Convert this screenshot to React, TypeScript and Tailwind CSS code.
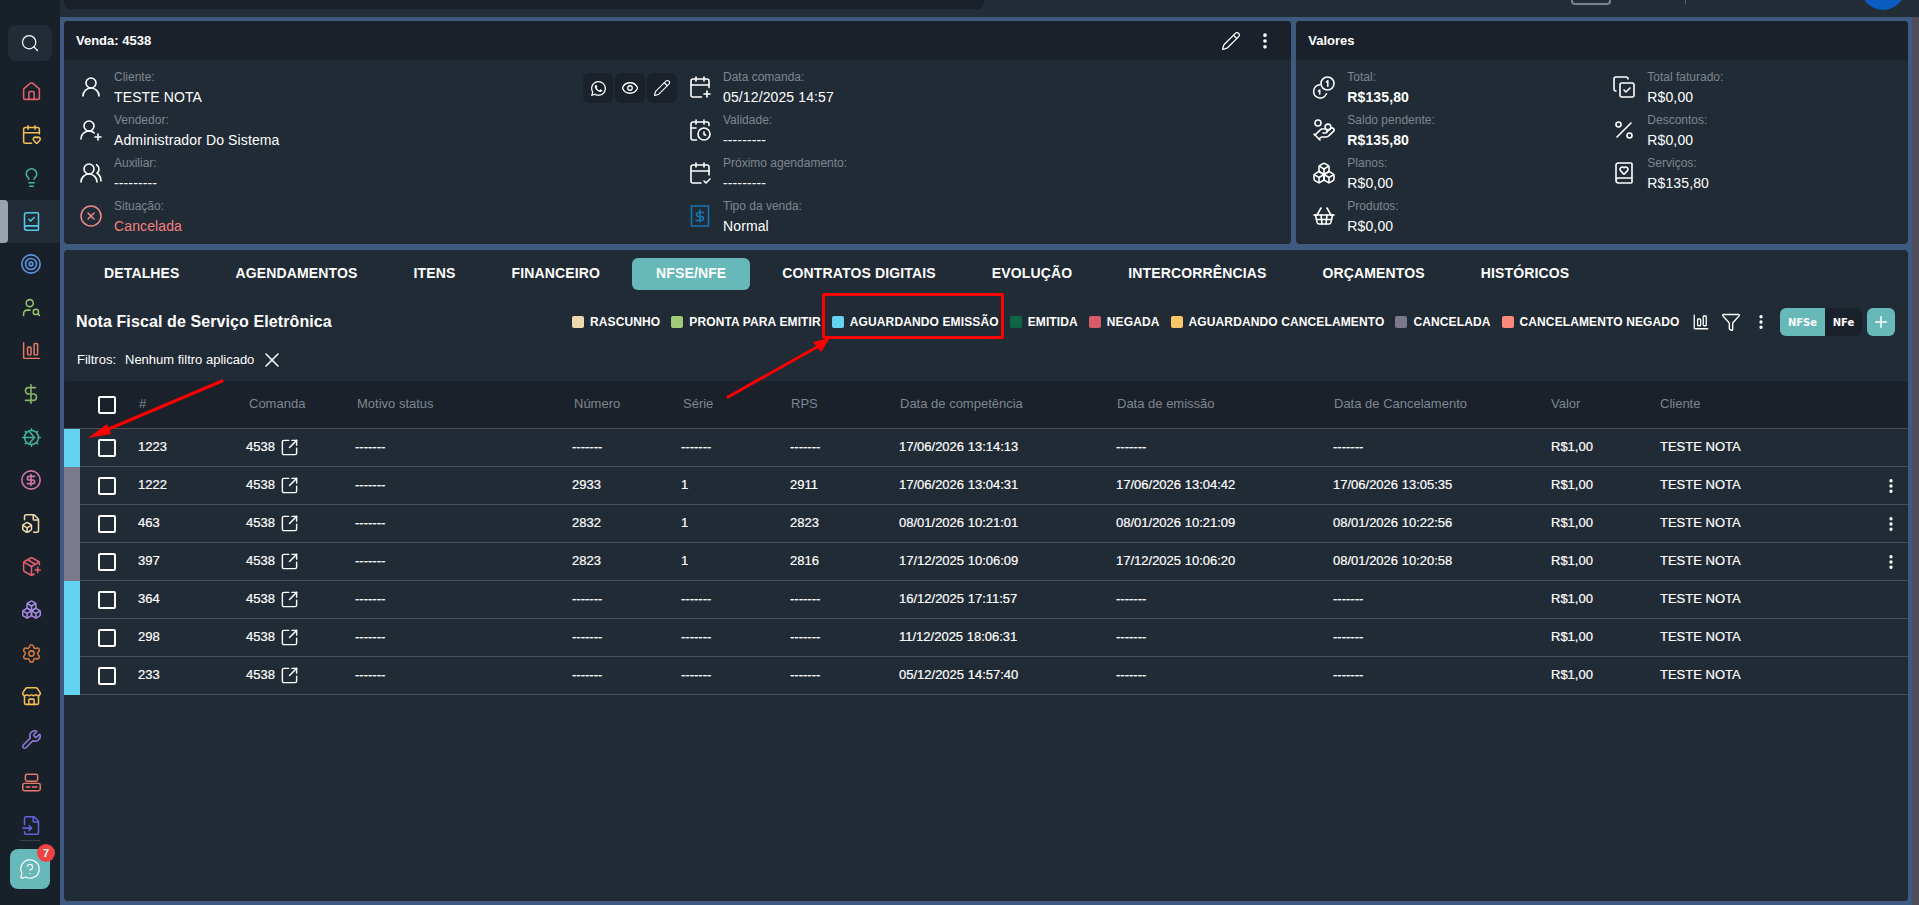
import type { ReactNode } from 'react';
import {
  BookCheck, BookHeart, Boxes, CalendarCheck2, CalendarClock, CalendarHeart, CalendarPlus, CircleDollarSign,
  CircleX, CopyCheck, DollarSign, EllipsisVertical, Eye, FileBox, FileInput, Funnel, HandCoins, House, Lightbulb,
  MessageCircleQuestion, PackagePlus, Pencil, Percent, Plus, Search, Settings, ShoppingBasket, SquareArrowOutUpRight,
  Store, Target, UserRound, UserRoundPlus, UserSearch, UsersRound, Wrench, X,
} from 'lucide-react';
import { BsWhatsapp } from 'react-icons/bs';

function BarsIcon({ className }: { className?: string }) {
  return (
    <svg viewBox="0 0 24 24" fill="none" stroke="currentColor" strokeWidth="1.7" strokeLinecap="round" className={className}>
      <path d="M3 3v17a1 1 0 0 0 1 1h17" />
      <rect x="7.5" y="8" width="4" height="9" rx="1" />
      <rect x="15" y="4" width="4" height="13" rx="1" />
    </svg>
  );
}

function GearPlayIcon({ className }: { className?: string }) {
  return (
    <svg viewBox="0 0 24 24" fill="none" stroke="currentColor" strokeWidth="1.8" strokeLinecap="round" strokeLinejoin="round" className={className}>
      <circle cx="12" cy="12" r="8" />
      <path d="M12 2v2M12 20v2M2 12h2M20 12h2M5 5l1.4 1.4M17.6 17.6 19 19M5 19l1.4-1.4M17.6 6.4 19 5" />
      <path d="M9 4.8 15.5 12 9 19.2M15.5 12H4" />
    </svg>
  );
}

function ServerIcon({ className }: { className?: string }) {
  return (
    <svg viewBox="0 0 24 24" fill="none" stroke="currentColor" strokeWidth="1.7" strokeLinecap="round" className={className}>
      <rect x="5" y="2.5" width="14" height="8" rx="2" />
      <rect x="2" y="13" width="20" height="8.5" rx="2" />
      <path d="M6 17.2h4M13 17.2h5" />
    </svg>
  );
}

function CoinsIcon({ className }: { className?: string }) {
  return (
    <svg viewBox="0 0 24 24" fill="none" stroke="currentColor" strokeWidth="1.6" strokeLinecap="round" strokeLinejoin="round" className={className}>
      <circle cx="15.5" cy="8.5" r="6.5" />
      <path d="M14.5 7l1.3-1.2v5.5" />
      <path d="M8 9.8a6.6 6.6 0 1 0 6.4 9" />
      <path d="M6.5 16l1.2-1v4" />
    </svg>
  );
}

function ReceiptIcon({ className }: { className?: string }) {
  return (
    <svg viewBox="0 0 24 24" fill="none" stroke="currentColor" strokeWidth="1.6" strokeLinecap="round" className={className}>
      <rect x="3.5" y="2" width="17" height="20" strokeDasharray="1.4 0.7" />
      <path d="M12 6v12M15.5 8.5H10.5a2 2 0 0 0 0 4h3a2 2 0 0 1 0 4H8" />
    </svg>
  );
}

const NAV = [
  { icon: <House size={21} strokeWidth={1.75} className="text-[#e0606e]" /> },
  { icon: <CalendarHeart size={21} strokeWidth={1.75} className="text-[#f5bd55]" /> },
  { icon: <Lightbulb size={21} strokeWidth={1.75} className="text-[#45b89a]" /> },
  { icon: <BookCheck size={21} strokeWidth={1.75} className="text-[#55c8ea]" />, active: true },
  { icon: <Target size={22} strokeWidth={1.75} className="text-[#5b93e0]" /> },
  { icon: <UserSearch size={21} strokeWidth={1.75} className="text-[#97c46c]" /> },
  { icon: <BarsIcon className="h-[21px] w-[21px] text-[#e5796c]" /> },
  { icon: <DollarSign size={22} strokeWidth={1.75} className="text-[#85b565]" /> },
  { icon: <GearPlayIcon className="h-[21px] w-[21px] text-[#3fb595]" /> },
  { icon: <CircleDollarSign size={22} strokeWidth={1.75} className="text-[#d276a8]" /> },
  { icon: <FileBox size={21} strokeWidth={1.75} className="text-[#eed9ab]" /> },
  { icon: <PackagePlus size={21} strokeWidth={1.75} className="text-[#e0606e]" /> },
  { icon: <Boxes size={21} strokeWidth={1.75} className="text-[#a58be0]" /> },
  { icon: <Settings size={21} strokeWidth={1.75} className="text-[#d9793f]" /> },
  { icon: <Store size={21} strokeWidth={1.75} className="text-[#f5bd55]" /> },
  { icon: <Wrench size={21} strokeWidth={1.75} className="text-[#8f7bd6]" /> },
  { icon: <ServerIcon className="h-[21px] w-[21px] text-[#e5796c]" /> },
  { icon: <FileInput size={21} strokeWidth={1.75} className="text-[#6163d8]" /> },
];

const LEGEND = [
  { label: 'RASCUNHO', color: 'bg-[#ecd9b0]' },
  { label: 'PRONTA PARA EMITIR', color: 'bg-[#a2cb78]' },
  { label: 'AGUARDANDO EMISSÃO', color: 'bg-[#62d4f2]' },
  { label: 'EMITIDA', color: 'bg-[#0e6645]' },
  { label: 'NEGADA', color: 'bg-[#d95b68]' },
  { label: 'AGUARDANDO CANCELAMENTO', color: 'bg-[#fcc666]' },
  { label: 'CANCELADA', color: 'bg-[#7a7a8c]' },
  { label: 'CANCELAMENTO NEGADO', color: 'bg-[#fb8a7a]' },
];

const TABS = ['DETALHES', 'AGENDAMENTOS', 'ITENS', 'FINANCEIRO', 'NFSE/NFE', 'CONTRATOS DIGITAIS', 'EVOLUÇÃO', 'INTERCORRÊNCIAS', 'ORÇAMENTOS', 'HISTÓRICOS'];

const COLUMNS = 'grid grid-cols-[58px_108px_109px_217px_109px_109px_109px_217px_217px_218px_109px_1fr_35px] items-center [&>div]:pb-[2px]';

const ROWS = [
  { id: '1223', stripe: 'bg-[#62d4f2]', numero: '-------', serie: '-------', rps: '-------', comp: '17/06/2026 13:14:13', emissao: '-------', cancel: '-------' },
  { id: '1222', stripe: 'bg-[#7a7a8c]', numero: '2933', serie: '1', rps: '2911', comp: '17/06/2026 13:04:31', emissao: '17/06/2026 13:04:42', cancel: '17/06/2026 13:05:35', menu: true },
  { id: '463', stripe: 'bg-[#7a7a8c]', numero: '2832', serie: '1', rps: '2823', comp: '08/01/2026 10:21:01', emissao: '08/01/2026 10:21:09', cancel: '08/01/2026 10:22:56', menu: true },
  { id: '397', stripe: 'bg-[#7a7a8c]', numero: '2823', serie: '1', rps: '2816', comp: '17/12/2025 10:06:09', emissao: '17/12/2025 10:06:20', cancel: '08/01/2026 10:20:58', menu: true },
  { id: '364', stripe: 'bg-[#62d4f2]', numero: '-------', serie: '-------', rps: '-------', comp: '16/12/2025 17:11:57', emissao: '-------', cancel: '-------' },
  { id: '298', stripe: 'bg-[#62d4f2]', numero: '-------', serie: '-------', rps: '-------', comp: '11/12/2025 18:06:31', emissao: '-------', cancel: '-------' },
  { id: '233', stripe: 'bg-[#62d4f2]', numero: '-------', serie: '-------', rps: '-------', comp: '05/12/2025 14:57:40', emissao: '-------', cancel: '-------' },
];

function Info({ icon, label, value, valueClass }: { icon: ReactNode; label: string; value: string; valueClass?: string }) {
  return (
    <div className="flex h-[43px] items-center">
      <div className="flex w-[24px] shrink-0 justify-center text-white">{icon}</div>
      <div className="ml-[11px]">
        <div className="text-[12px] leading-5 text-[#7f868e]">{label}</div>
        <div className={`text-[14px] leading-5 tracking-[0.12px] ${valueClass ?? 'text-white'}`}>{value}</div>
      </div>
    </div>
  );
}

function Checkbox() {
  return <span className="block h-[18px] w-[18px] rounded-[2px] border-2 border-white" />;
}

export default function App() {
  return (
    <div className="relative flex h-screen w-full overflow-hidden bg-[#18202a] font-['Liberation_Sans',sans-serif] text-white">
      <aside className="flex w-[60px] shrink-0 flex-col">
        <div className="ml-2 mt-[25px] flex h-[36px] w-[44px] items-center justify-center rounded-lg bg-[#222c37]">
          <Search size={20} strokeWidth={1.5} />
        </div>
        <nav className="mt-[9px] flex flex-col">
          {NAV.map((item, i) => (
            <div key={i} className={`relative flex h-[43.2px] items-center justify-center pl-[2px] ${item.active ? 'bg-[#222c37]' : ''}`}>
              {item.active && <span className="absolute inset-y-0 left-0 w-2 rounded-r bg-[#9ca3af]" />}
              {item.icon}
            </div>
          ))}
        </nav>
        <div className="mx-5 -mt-[7px] border-t border-[#39414b]" />
        <div className="relative ml-[10px] mt-2 flex h-[40px] w-[40px] items-center justify-center rounded-lg bg-[#66b9b8]">
          <MessageCircleQuestion size={22} strokeWidth={1.3} />
          <span className="absolute -right-[5px] -top-[5px] flex h-[18px] w-[18px] items-center justify-center rounded-full bg-[#ef4444] text-[11px] font-bold">7</span>
        </div>
      </aside>

      <div className="flex min-w-0 flex-1 flex-col bg-[#232d38]">
        <header className="flex h-[17px] shrink-0 overflow-hidden">
          <div className="ml-1 h-[9px] w-[920px] rounded-b-md bg-[#1a212b]" />
          <div className="ml-[587px] h-[5px] w-[40px] rounded-b-[4px] border-x-2 border-b-2 border-[#7b828b]" />
          <div className="ml-[74px] h-[4px] w-px bg-[#5b636c]" />
          <div className="ml-[175px] -mt-[34px] h-[44px] w-[44px] shrink-0 rounded-full bg-[#0b5cc2]" />
        </header>

        <div className="flex min-h-0 flex-1">
          <main className="flex w-[1852px] shrink-0 flex-col gap-[6px] bg-[#3e5a80] px-1 pb-1 pt-1">
            <div className="flex h-[223px] shrink-0 gap-[5px]">
              <section className="w-[1228px] overflow-hidden rounded bg-[#212b36]">
                <div className="flex h-[39px] items-center bg-[#1a212b] pl-3 pr-4">
                  <h2 className="text-[13px] font-bold">Venda: 4538</h2>
                  <Pencil size={20} strokeWidth={1.5} className="ml-auto" />
                  <EllipsisVertical size={20} strokeWidth={2.4} className="ml-[14px]" />
                </div>
                <div className="flex pt-[5.5px]">
                  <div className="w-[613px] pl-[15px]">
                    <div className="flex items-start">
                      <Info icon={<UserRound size={24} strokeWidth={1.6} />} label="Cliente:" value="TESTE NOTA" />
                      <div className="ml-auto mt-[7.5px] flex gap-[2px]">
                        <span className="flex h-[30px] w-[30px] items-center justify-center rounded-md bg-[#1a212b]"><BsWhatsapp size={15} /></span>
                        <span className="flex h-[30px] w-[30px] items-center justify-center rounded-md bg-[#1a212b]"><Eye size={18} strokeWidth={1.7} /></span>
                        <span className="flex h-[30px] w-[30px] items-center justify-center rounded-md bg-[#1a212b]"><Pencil size={18} strokeWidth={1.5} /></span>
                      </div>
                    </div>
                    <Info icon={<UserRoundPlus size={24} strokeWidth={1.6} />} label="Vendedor:" value="Administrador Do Sistema" />
                    <Info icon={<UsersRound size={24} strokeWidth={1.6} />} label="Auxiliar:" value="---------" />
                    <Info icon={<CircleX size={28} strokeWidth={1.5} className="text-[#f08a8a]" />} label="Situação:" value="Cancelada" valueClass="text-[#f47f7f]" />
                  </div>
                  <div className="pl-[11px]">
                    <Info icon={<CalendarPlus size={24} strokeWidth={1.6} />} label="Data comanda:" value="05/12/2025 14:57" />
                    <Info icon={<CalendarClock size={24} strokeWidth={1.6} />} label="Validade:" value="---------" />
                    <Info icon={<CalendarCheck2 size={24} strokeWidth={1.6} />} label="Próximo agendamento:" value="---------" />
                    <Info icon={<ReceiptIcon className="h-[26px] w-[26px] text-[#1577b5]" />} label="Tipo da venda:" value="Normal" />
                  </div>
                </div>
              </section>

              <section className="w-[612px] overflow-hidden rounded bg-[#212b36]">
                <div className="flex h-[39px] items-center bg-[#1a212b] pl-3">
                  <h2 className="text-[13px] font-bold">Valores</h2>
                </div>
                <div className="flex pt-[5.5px]">
                  <div className="w-[301px] pl-4">
                    <Info icon={<CoinsIcon className="h-6 w-6" />} label="Total:" value="R$135,80" valueClass="font-bold text-white" />
                    <Info icon={<HandCoins size={24} strokeWidth={1.6} />} label="Saldo pendente:" value="R$135,80" valueClass="font-bold text-white" />
                    <Info icon={<Boxes size={24} strokeWidth={1.6} />} label="Planos:" value="R$0,00" />
                    <Info icon={<ShoppingBasket size={24} strokeWidth={1.6} />} label="Produtos:" value="R$0,00" />
                  </div>
                  <div className="pl-[15px]">
                    <Info icon={<CopyCheck size={24} strokeWidth={1.6} />} label="Total faturado:" value="R$0,00" />
                    <Info icon={<Percent size={24} strokeWidth={1.6} />} label="Descontos:" value="R$0,00" />
                    <Info icon={<BookHeart size={24} strokeWidth={1.6} />} label="Serviços:" value="R$135,80" />
                  </div>
                </div>
              </section>
            </div>

            <section className="min-h-0 flex-1 overflow-hidden rounded bg-[#212b36]">
              <nav className="flex gap-2 pl-4 pt-2">
                {TABS.map((tab) => (
                  <div
                    key={tab}
                    className={`flex h-[32px] items-center rounded-md px-6 pb-px text-[14px] font-bold tracking-[0.14px] ${tab === 'NFSE/NFE' ? 'bg-[#66b9b8]' : ''}`}
                  >
                    {tab}
                  </div>
                ))}
              </nav>

              <div className="mt-[18px] flex h-[28px] items-center pl-3 pr-[13px]">
                <h1 className="w-[496px] shrink-0 pb-px text-[16px] font-bold tracking-[0.1px]">Nota Fiscal de Serviço Eletrônica</h1>
                <div className="flex items-center gap-[11px]">
                  {LEGEND.map((item) => (
                    <div key={item.label} className="flex items-center gap-[6px] whitespace-nowrap text-[12px] font-bold tracking-[0.12px]">
                      <span className={`h-3 w-3 rounded-[2px] ${item.color}`} />
                      {item.label}
                    </div>
                  ))}
                </div>
                <div className="ml-auto flex items-center">
                  <BarsIcon className="h-[18px] w-[18px]" />
                  <Funnel size={20} strokeWidth={1.7} className="ml-[11px]" />
                  <EllipsisVertical size={18} strokeWidth={2.4} className="ml-[11px]" />
                  <div className="ml-[10px] flex h-[28px] w-[82px] overflow-hidden rounded-md bg-[#1a212b] font-['DejaVu_Sans',sans-serif] text-[10px] font-bold">
                    <span className="flex w-[45px] items-center justify-center bg-[#66b9b8]">NFSe</span>
                    <span className="flex flex-1 items-center justify-center">NFe</span>
                  </div>
                  <span className="ml-[5px] flex h-[28px] w-[28px] items-center justify-center rounded-md bg-[#66b9b8]"><Plus size={18} /></span>
                </div>
              </div>

              <div className="flex h-[45px] items-center pl-[13px] pt-[3px] text-[13px]">
                <span>Filtros:</span>
                <span className="ml-[9px]">Nenhum filtro aplicado</span>
                <X size={24} strokeWidth={1.5} className="ml-[6px]" />
              </div>

              <div className="rounded-t bg-[#1a212b]">
                <div className="ml-4 h-[47px] text-[13px] text-[#7f868e]">
                  <div className={`${COLUMNS} h-full`}>
                    <div className="!pb-0 pl-[18px]"><Checkbox /></div>
                    <div className="pl-px">#</div>
                    <div className="pl-[3px]">Comanda</div>
                    <div className="pl-[2px]">Motivo status</div>
                    <div className="pl-[2px]">Número</div>
                    <div className="pl-[2px]">Série</div>
                    <div className="pl-px">RPS</div>
                    <div className="pl-px">Data de competência</div>
                    <div className="pl-px">Data de emissão</div>
                    <div className="pl-px">Data de Cancelamento</div>
                    <div>Valor</div>
                    <div>Cliente</div>
                    <div />
                  </div>
                </div>
              </div>
              <div className="border-t border-[#4b5056]">
                {ROWS.map((row) => (
                  <div key={row.id} className="flex h-[38px]">
                    <span className={`w-4 shrink-0 ${row.stripe}`} />
                    <div className={`${COLUMNS} min-w-0 flex-1 border-b border-[#4b5056] text-[13px] [-webkit-text-stroke:0.2px_white]`}>
                      <div className="!pb-0 pl-[18px]"><Checkbox /></div>
                      <div>{row.id}</div>
                      <div className="flex items-center gap-[5px] !pb-0">
                        <span className="pb-[2px]">4538</span>
                        <SquareArrowOutUpRight size={19} strokeWidth={1.8} />
                      </div>
                      <div>-------</div>
                      <div>{row.numero}</div>
                      <div>{row.serie}</div>
                      <div>{row.rps}</div>
                      <div>{row.comp}</div>
                      <div>{row.emissao}</div>
                      <div>{row.cancel}</div>
                      <div>R$1,00</div>
                      <div>TESTE NOTA</div>
                      <div className="!pb-0 pl-[9px]">{row.menu && <EllipsisVertical size={18} strokeWidth={2.4} />}</div>
                    </div>
                  </div>
                ))}
              </div>
            </section>
          </main>
          <div className="flex-1 bg-[#4d4d5c]" />
        </div>
      </div>

      <div className="pointer-events-none absolute left-[822px] top-[293px] h-[46px] w-[182px] rounded-[2px] border-[3px] border-[#ff0000]" />
      <svg className="pointer-events-none absolute left-0 top-0 h-[905px] w-[1919px]" viewBox="0 0 1919 905" fill="none">
        <path d="M222 381 104 431" stroke="#ff0000" strokeWidth="3" strokeLinecap="round" />
        <path d="M88 438 107 424 111 434Z" fill="#ff0000" />
        <path d="M728 397 817 347" stroke="#ff0000" strokeWidth="3" strokeLinecap="round" />
        <path d="M830 338 813 342 821 352Z" fill="#ff0000" />
      </svg>
    </div>
  );
}
